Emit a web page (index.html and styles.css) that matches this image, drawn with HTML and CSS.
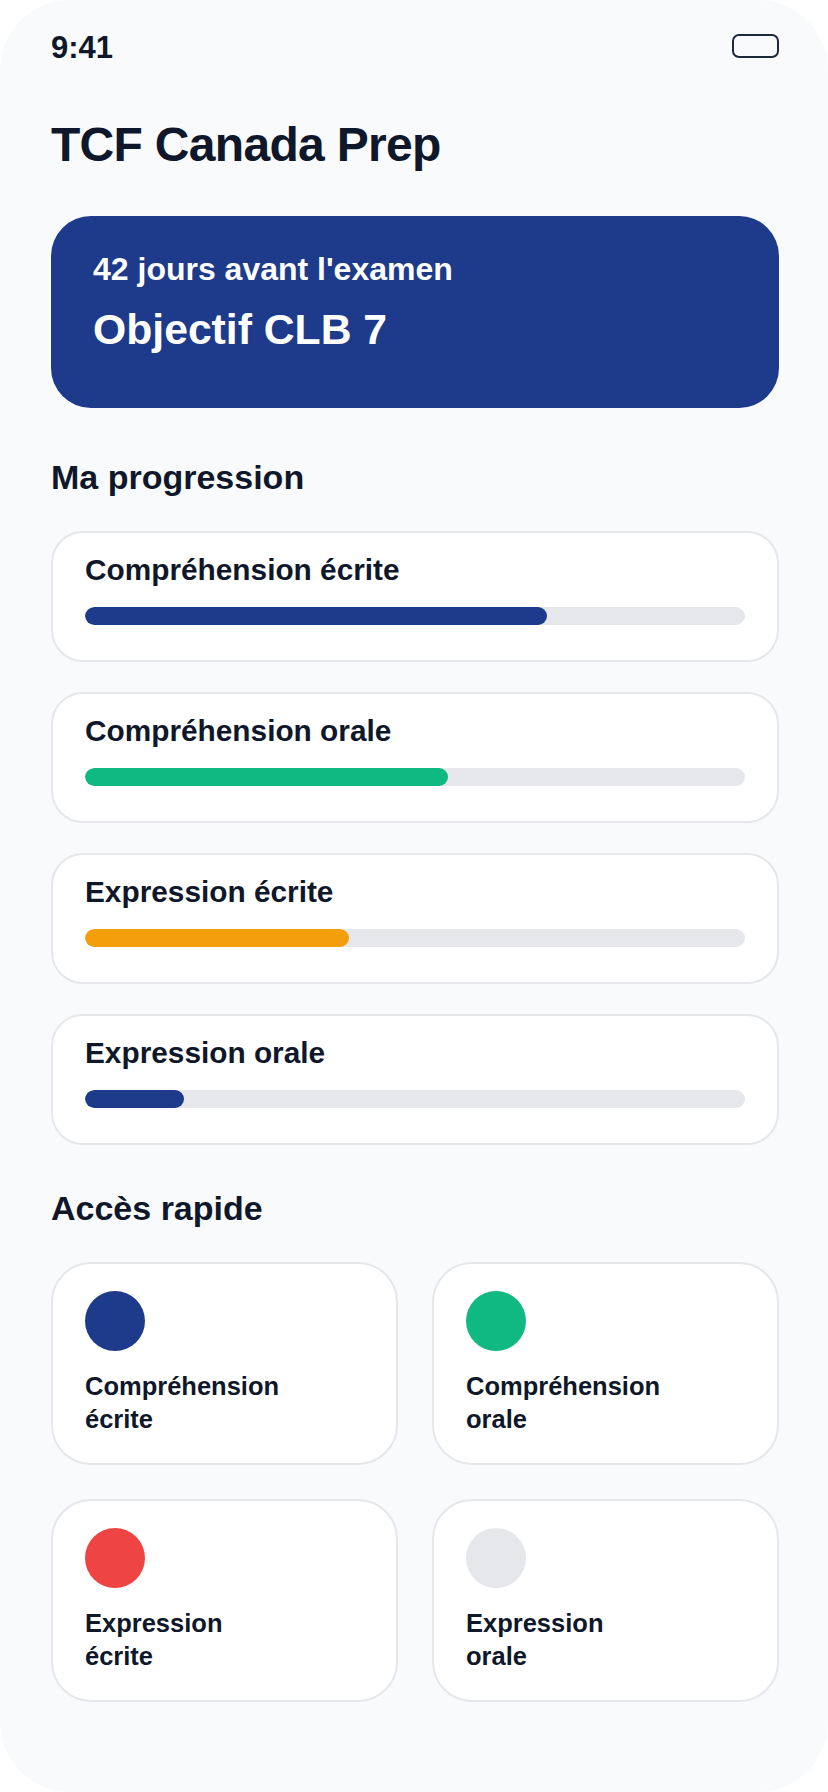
FILE: index.html
```html
<!DOCTYPE html>
<html lang="fr">
<head>
<meta charset="utf-8">
<title>TCF Canada Prep</title>
<link rel="stylesheet" href="styles.css">
</head>
<body>
<div class="phone">
  <div class="status">
    <span class="time">9:41</span>
    <span class="battery"></span>
  </div>

  <h1 class="title">TCF Canada Prep</h1>

  <section class="hero">
    <p class="hero-sub">42 jours avant l'examen</p>
    <p class="hero-goal">Objectif CLB 7</p>
  </section>

  <h2 class="section-title">Ma progression</h2>
  <div class="progress-list">
    <div class="progress-card">
      <div class="progress-label">Compréhension écrite</div>
      <div class="track"><div class="fill fill-blue" style="width:70%"></div></div>
    </div>
    <div class="progress-card">
      <div class="progress-label">Compréhension orale</div>
      <div class="track"><div class="fill fill-green" style="width:55%"></div></div>
    </div>
    <div class="progress-card">
      <div class="progress-label">Expression écrite</div>
      <div class="track"><div class="fill fill-amber" style="width:40%"></div></div>
    </div>
    <div class="progress-card">
      <div class="progress-label">Expression orale</div>
      <div class="track"><div class="fill fill-blue" style="width:15%"></div></div>
    </div>
  </div>

  <h2 class="section-title section-title-2">Accès rapide</h2>
  <div class="quick-grid">
    <div class="quick-card">
      <span class="dot dot-blue"></span>
      <div class="quick-label">Compréhension écrite</div>
    </div>
    <div class="quick-card">
      <span class="dot dot-green"></span>
      <div class="quick-label">Compréhension orale</div>
    </div>
    <div class="quick-card">
      <span class="dot dot-red"></span>
      <div class="quick-label">Expression écrite</div>
    </div>
    <div class="quick-card">
      <span class="dot dot-gray"></span>
      <div class="quick-label">Expression orale</div>
    </div>
  </div>
</div>
</body>
</html>
```

FILE: styles.css
```css
* { box-sizing: border-box; }

html, body {
  margin: 0;
  padding: 0;
  background: #ffffff;
}

body {
  font-family: "Liberation Sans", Arial, sans-serif;
  color: #0f172a;
}

.phone {
  width: 828px;
  height: 1792px;
  background: #f8fafc;
  border-radius: 70px;
  overflow: hidden;
  padding: 30px 49px 0 51px;
}

.status {
  display: flex;
  justify-content: space-between;
  align-items: center;
  height: 35px;
}

.time {
  font-size: 31px;
  font-weight: 700;
  line-height: 35px;
}

.battery {
  width: 47px;
  height: 24px;
  border: 2px solid #1e293b;
  border-radius: 7px;
  margin-bottom: 4px;
}

.title {
  margin: 52px 0 0;
  font-size: 48px;
  line-height: 55px;
  font-weight: 700;
  letter-spacing: -0.7px;
}

.hero {
  margin-top: 44px;
  height: 192px;
  background: #1e3a8a;
  border-radius: 40px;
  padding: 35px 42px 0;
  color: #ffffff;
}

.hero p { margin: 0; font-weight: 700; }

.hero-sub {
  font-size: 32px;
  line-height: 37px;
}

.hero-goal {
  margin-top: 17px !important;
  font-size: 42.7px;
  line-height: 48px;
}

.section-title {
  margin: 50px 0 0;
  font-size: 34px;
  line-height: 39px;
  font-weight: 700;
}

.section-title-2 { margin-top: 44px; }

.progress-list {
  margin-top: 34px;
  display: flex;
  flex-direction: column;
  gap: 30px;
}

.progress-card {
  background: #ffffff;
  border: 2px solid #e5e7eb;
  border-radius: 32px;
  padding: 20px 32px 35px;
}

.progress-label {
  font-size: 29.8px;
  line-height: 34px;
  font-weight: 700;
}

.track {
  margin-top: 20px;
  height: 18px;
  border-radius: 9px;
  background: #e5e7eb;
  overflow: hidden;
}

.fill { height: 100%; border-radius: 9px; }
.fill-blue { background: #1e3a8a; }
.fill-green { background: #10b981; }
.fill-amber { background: #f59e0b; }

.quick-grid {
  margin-top: 34px;
  display: grid;
  grid-template-columns: 1fr 1fr;
  gap: 34px 34px;
}

.quick-card {
  background: #ffffff;
  border: 2px solid #e5e7eb;
  border-radius: 40px;
  padding: 27px 32px;
  height: 203px;
}

.dot {
  display: block;
  width: 60px;
  height: 60px;
  border-radius: 50%;
}
.dot-blue { background: #1e3a8a; }
.dot-green { background: #10b981; }
.dot-red { background: #ef4444; }
.dot-gray { background: #e5e7eb; }

.quick-label {
  margin-top: 19px;
  width: 200px;
  font-size: 25.5px;
  line-height: 33px;
  font-weight: 700;
}
```
